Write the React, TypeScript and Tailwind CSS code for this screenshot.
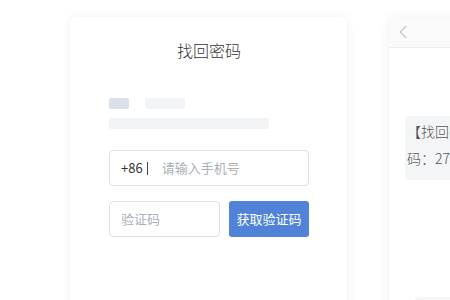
import { ChevronLeft } from "lucide-react";

const font = { fontFamily: '"Noto Sans CJK SC", "Noto Sans", sans-serif' };

export default function App() {
  return (
    <div
      className="w-[450px] h-[300px] overflow-hidden bg-white flex gap-[42px] pl-[70px] pt-[17px]"
      style={font}
    >
      {/* Left card: form */}
      <div className="w-[277px] h-[320px] shrink-0 bg-white rounded-md shadow-[0_0_10px_rgba(0,0,0,0.07)] pt-[20px] pl-[39px]">
        <h1 className="w-[200px] text-center text-[16px] leading-[26px] font-light text-[#333]">找回密码</h1>

        {/* skeleton */}
        <div className="mt-[35px] flex gap-[16px]">
          <div className="w-[20px] h-[11px] rounded-[2px] bg-[#d9e0e8]" />
          <div className="w-[40px] h-[11px] rounded-[2px] bg-[#f2f4f7]" />
        </div>
        <div className="mt-[9px] w-[160px] h-[11px] rounded-[2px] bg-[#f3f4f6]" />

        {/* phone */}
        <div className="mt-[21px] w-[200px] h-[36px] border border-[#dcdfe6] rounded-[4px] flex items-center pl-[11px] text-[13px]">
          <span className="text-[#333]">+86</span>
          <span className="ml-[4px] w-px h-[13px] bg-[#444]" />
          <span className="ml-[14px] text-[#aab0b8]">请输入手机号</span>
        </div>

        {/* code */}
        <div className="mt-[15px] flex gap-[9px]">
          <div className="w-[111px] h-[36px] border border-[#dcdfe6] rounded-[4px] flex items-center pl-[11px] text-[13px] text-[#aab0b8]">
            验证码
          </div>
          <button className="w-[80px] h-[36px] rounded-[3px] bg-[#5083d8] text-white text-[13px]">
            获取验证码
          </button>
        </div>
      </div>

      {/* Right card: phone preview */}
      <div className="w-[300px] h-[320px] shrink-0 bg-white rounded-md shadow-[0_0_10px_rgba(0,0,0,0.07)] overflow-hidden">
        <div className="h-[31px] bg-[#fafafa] border-b border-[#eeeeee] flex items-center pl-[3px]">
          <ChevronLeft size={22} strokeWidth={1.3} className="text-[#c0c4cc]" />
        </div>
        <div className="mt-[68px] ml-[16px] w-[260px] rounded-[4px] bg-[#f4f5f7] pt-[2px] pb-[8px] pl-[2px] text-[14px] leading-[27px] font-light text-[#555]">
          <div>【找回密码】您的验证</div>
          <div>码：276458，请勿泄露</div>
        </div>
        <div className="mt-[117px] ml-[26px] w-[240px] h-[4px] rounded-t bg-[#f5f6f8]" />
      </div>
    </div>
  );
}
